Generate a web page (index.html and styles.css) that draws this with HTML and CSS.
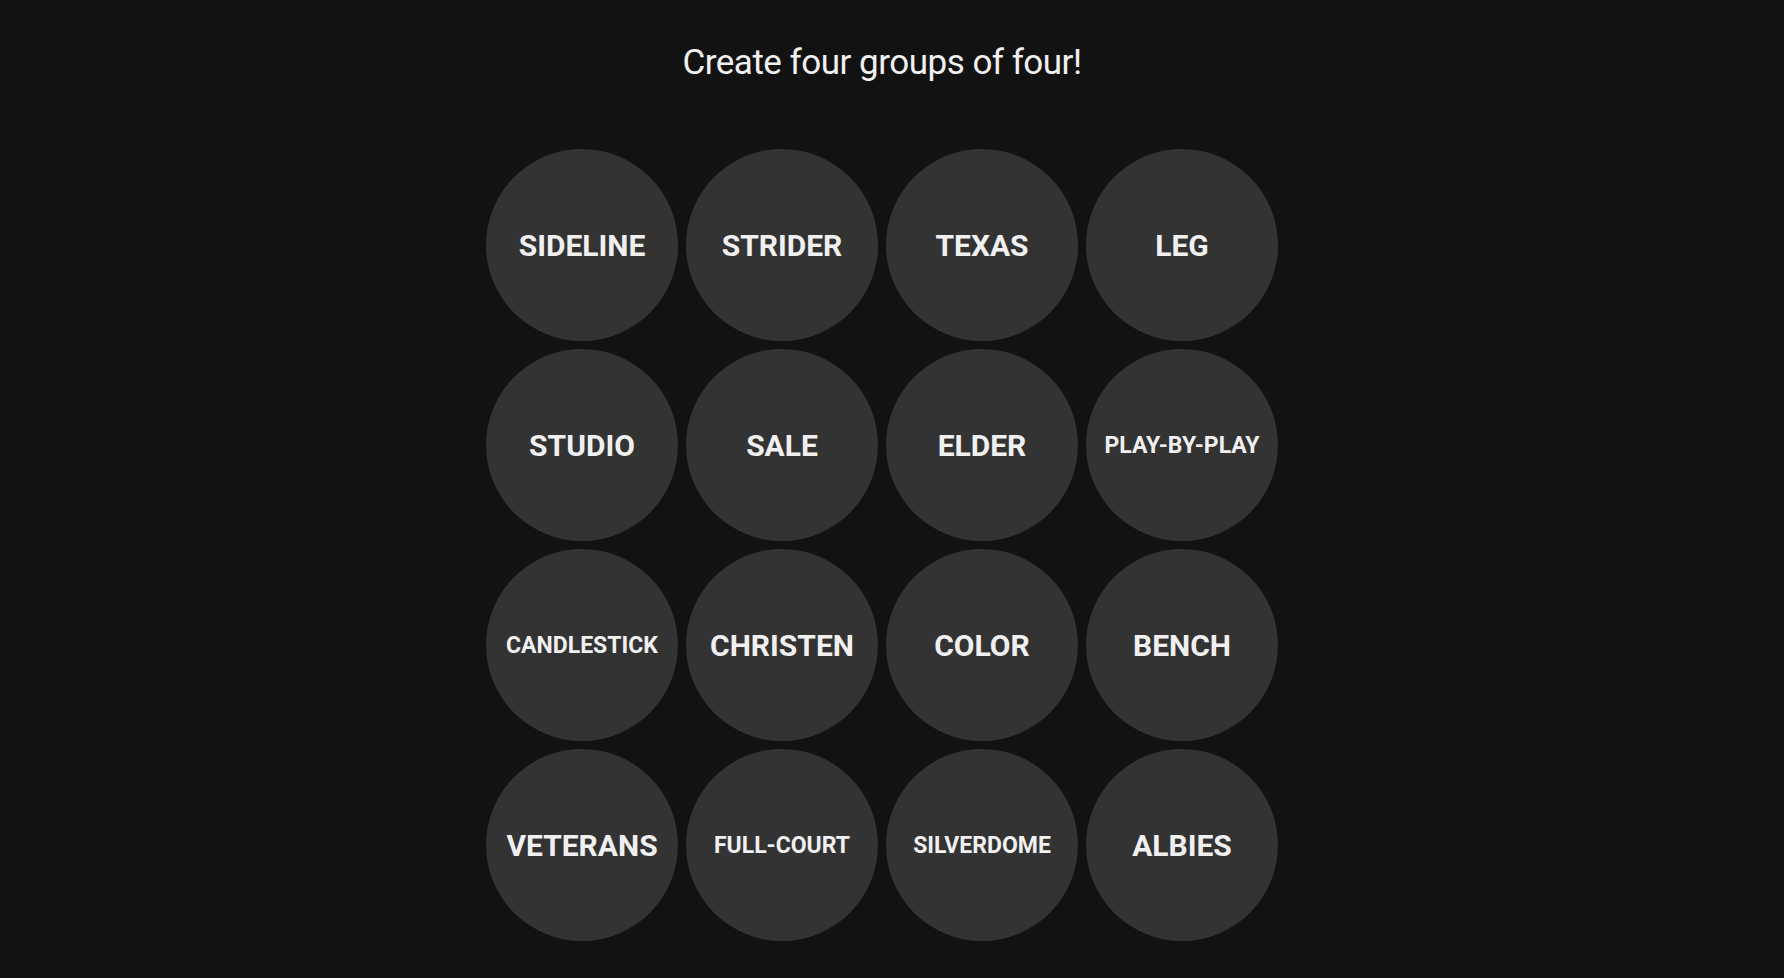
FILE: index.html
```html
<!DOCTYPE html>
<html lang="en">
<head>
    <meta charset="UTF-8">
    <meta name="viewport" content="width=device-width, initial-scale=1.0">
    <title>Connections</title>
    <link rel="stylesheet" href="styles.css">
</head>
<body>

    <main class="game">
        <h1 class="prompt">Create four groups of four!</h1>

        <div class="board">
            <button class="tile">SIDELINE</button>
            <button class="tile">STRIDER</button>
            <button class="tile">TEXAS</button>
            <button class="tile">LEG</button>

            <button class="tile">STUDIO</button>
            <button class="tile">SALE</button>
            <button class="tile">ELDER</button>
            <button class="tile small">PLAY-BY-PLAY</button>

            <button class="tile small">CANDLESTICK</button>
            <button class="tile">CHRISTEN</button>
            <button class="tile">COLOR</button>
            <button class="tile">BENCH</button>

            <button class="tile">VETERANS</button>
            <button class="tile small">FULL-COURT</button>
            <button class="tile small">SILVERDOME</button>
            <button class="tile">ALBIES</button>
        </div>
    </main>

</body>
</html>
```

FILE: styles.css
```css
body {
    margin: 0;
    padding-right: 20px;
    background-color: #121212;
    color: #f0f0f0;
    font-family: Roboto, "Liberation Sans", sans-serif;
}
.game {
    display: flex;
    flex-direction: column;
    align-items: center;
}
.prompt {
    margin: 41px 0 65px;
    font-size: 35px;
    font-weight: normal;
    letter-spacing: -0.5px;
    line-height: 43px;
}
.board {
    display: grid;
    grid-template-columns: repeat(4, 192px);
    grid-auto-rows: 192px;
    gap: 8px;
}
.tile {
    display: flex;
    align-items: center;
    justify-content: center;
    padding: 0;
    border: none;
    border-radius: 50%;
    background-color: #333333;
    color: #f0f0f0;
    font-family: Roboto, "Liberation Sans", sans-serif;
    font-size: 30px;
    font-weight: bold;
    cursor: pointer;
}
.tile.small {
    font-size: 23px;
}
```
